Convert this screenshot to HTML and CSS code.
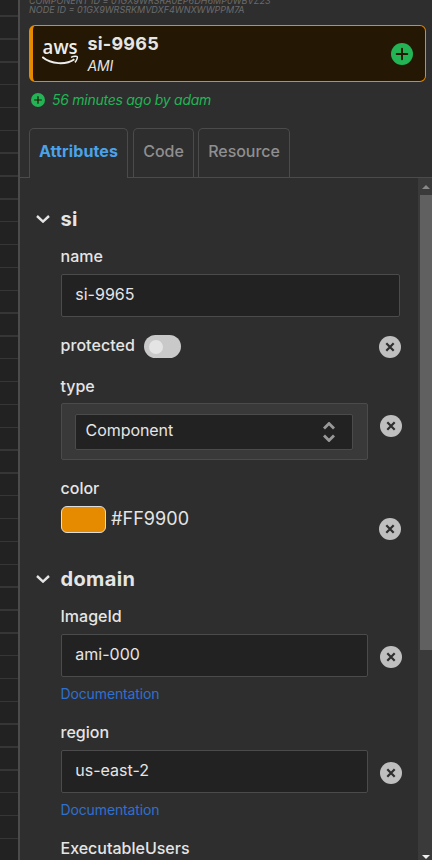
FILE: index.html
```html
<!DOCTYPE html>
<html lang="en">
<head>
<meta charset="utf-8">
<title>si-9965</title>
<link rel="stylesheet" href="styles.css">
</head>
<body>
<svg class="defs" width="0" height="0">
  <symbol id="clear" viewBox="0 0 22 22"><circle cx="11" cy="11" r="11" fill="#bfbfbf"/><path d="M7.3 7.3l7.4 7.4M14.7 7.3l-7.4 7.4" stroke="#2e2e2e" stroke-width="2.2"/></symbol>
  <symbol id="plus" viewBox="0 0 22 22"><circle cx="11" cy="11" r="11" fill="#22b455"/><path d="M11 5.7v10.6M5.7 11h10.6" stroke="#241703" stroke-width="1.9" stroke-linecap="round"/></symbol>
  <symbol id="chevron" viewBox="0 0 14 8"><path d="M1 1l6 5.6L13 1" fill="none" stroke="#e5e5e5" stroke-width="2.4"/></symbol>
</svg>
<div class="app">
  <div class="canvas"></div>
  <aside class="panel">
    <div class="ids"><div class="id-a">COMPONENT ID = 01GX9WRSRA0EP6DH6MP0WBVZ23</div><div class="id-b">NODE ID = 01GX9WRSRKMVDXF4WNXWWPPM7A</div></div>
    <div class="card">
      <svg class="aws" width="38" height="30" viewBox="0 0 38 30"><text x=".6" y="15" textLength="35" lengthAdjust="spacingAndGlyphs">aws</text><path d="M.3 18C9 25.4 24 26.2 32.4 20.2" fill="none" stroke="#eee" stroke-width="2"/><path d="M29 18.4c3-1.4 6-1.3 6.3-.6s-.4 3.6-2.4 5.6" fill="none" stroke="#eee" stroke-width="1.5"/></svg>
      <div class="names"><div class="title">si-9965</div><div class="kind">AMI</div></div>
      <svg class="badge"><use href="#plus"/></svg>
    </div>
    <div class="status"><svg><use href="#plus"/></svg><span>56 minutes ago by adam</span></div>
    <nav class="tabs"><div class="tab active">Attributes</div><div class="tab code">Code</div><div class="tab resource">Resource</div></nav>
    <div class="body">
      <main class="form">
        <div class="section first"><svg><use href="#chevron"/></svg><h2>si</h2></div>
        <div class="label">name</div>
        <div class="row"><div class="input wide">si-9965</div></div>
        <div class="row protected"><span class="text">protected</span><span class="toggle"></span><svg class="clear"><use href="#clear"/></svg></div>
        <div class="label type-label">type</div>
        <div class="row type"><div class="selectbox"><div class="select"><span>Component</span><svg width="12" height="20" viewBox="0 0 12 20"><path d="M1 6.5l5-5 5 5M1 13.5l5 5 5-5" fill="none" stroke="#999" stroke-width="2.8"/></svg></div></div><svg class="clear"><use href="#clear"/></svg></div>
        <div class="label color-label">color</div>
        <div class="row color"><span class="swatch"></span><span class="hex">#FF9900</span><svg class="clear"><use href="#clear"/></svg></div>
        <div class="section domain"><svg><use href="#chevron"/></svg><h2>domain</h2></div>
        <div class="label">ImageId</div>
        <div class="row"><div class="input">ami-000</div><svg class="clear"><use href="#clear"/></svg></div>
        <a class="doc">Documentation</a>
        <div class="label">region</div>
        <div class="row"><div class="input">us-east-2</div><svg class="clear"><use href="#clear"/></svg></div>
        <a class="doc">Documentation</a>
        <div class="label">ExecutableUsers</div>
      </main>
      <div class="scrollbar"><i class="up"></i><div class="thumb"></div><i class="down"></i></div>
    </div>
  </aside>
</div>
</body>
</html>
```
FILE: styles.css
```css
* { box-sizing: border-box; }
body { margin: 0; background: #2e2e2e; color: #e5e5e5; font-family: Inter, sans-serif; overflow: hidden; }
.defs { display: none; }
.app { display: flex; width: 432px; height: 860px; overflow: hidden; }
.canvas { width: 18px; flex: none; background: repeating-linear-gradient(#222 0 21.44px, #363636 21.44px 22.84px) 0 -6px / 18px 900px; }
.panel { flex: 1; min-width: 0; border-left: 2px solid #4b4b4b; display: flex; flex-direction: column; }
.ids { height: 25px; flex: none; padding-left: 9px; margin-top: -4px; margin-bottom: 4px; font-size: 9px; line-height: 9px; font-style: italic; color: #6b6b6b; white-space: nowrap; }
.id-a { letter-spacing: .04px; }
.id-b { letter-spacing: 0; }
.card { flex: none; height: 57px; margin: 0 6px 0 9px; background: #241703; border: 1px solid #e68a00; border-left-width: 4px; border-radius: 6px; display: flex; align-items: center; padding: 0 12px 0 9px; }
.aws text { font: 600 20px "Open Sans", sans-serif; fill: #eee; }
.names { margin-left: 7.5px; flex: 1; }
.title { font-size: 18px; font-weight: 700; line-height: 22px; letter-spacing: .2px; padding-top: 1px; }
.kind { font-size: 14px; font-style: italic; line-height: 21px; letter-spacing: -.2px; }
.badge { width: 22px; height: 22px; }
.status { height: 34px; flex: none; display: flex; align-items: center; padding-left: 11px; gap: 7px; color: #22b455; font-size: 14px; font-style: italic; letter-spacing: -.26px; }
.status svg { width: 14px; height: 14px; margin-top: 1px; }
.tabs { flex: none; height: 62px; padding: 12px 0 0 9px; display: flex; gap: 5px; border-bottom: 1px solid #4b4b4b; }
.tab { height: 49px; border: 1px solid #4b4b4b; border-bottom: 0; border-radius: 5px 5px 0 0; display: flex; justify-content: center; align-items: center; font-size: 16px; font-weight: 500; letter-spacing: -.05px; color: #8f8f8f; padding-bottom: 4px; }
.active { width: 99px; height: 50px; background: #2e2e2e; color: #4aa3ea; font-weight: 700; letter-spacing: .12px; padding-bottom: 5px; }
.code { width: 61px; }
.resource { width: 92px; }
.tab + .resource { margin-left: -1px; }
.body { flex: 1; min-height: 0; display: flex; overflow: hidden; }
.form { flex: 1; padding: 20px 0 0 41px; }
.section { height: 40px; margin-left: -25px; margin-bottom: 2px; display: flex; align-items: center; gap: 10.5px; }
.section svg { width: 14px; height: 8px; }
.first { padding-top: 2px; }
h2 { margin: 0; font-size: 20px; font-weight: 700; line-height: 28px; letter-spacing: .35px; }
.label { height: 34px; line-height: 32px; font-size: 16px; font-weight: 500; text-indent: -.5px; }
.type-label { line-height: 34px; }
.row { display: flex; align-items: flex-start; }
.input { width: 307px; height: 43px; border: 1px solid #4b4b4b; border-radius: 2px; background: #222; padding-left: 13.3px; font-size: 16px; line-height: 38px; }
.input.wide { width: 339px; }
.clear { width: 22px; height: 22px; margin: 11.6px 0 0 11.6px; flex: none; }
.protected { height: 45px; margin-top: 7px; font-size: 16px; font-weight: 500; }
.protected .text { line-height: 42px; width: 83px; text-indent: -.5px; letter-spacing: .06px; }
.toggle { width: 37px; height: 23px; margin-top: 11px; border-radius: 12px; background: #c9c9c9; padding: 5px; }
.toggle::before { content: ""; display: block; width: 14px; height: 14px; border-radius: 50%; background: #e4e4e4; }
.protected .clear, .color .clear { margin-left: auto; margin-right: 16.6px; }
.selectbox { width: 307px; height: 57px; border: 1px solid #4b4b4b; border-radius: 2px; background: #393939; padding: 10px 14px 9px 13px; }
.type .clear { margin-top: 12.4px; }
.select { height: 36px; border: 1px solid #4b4b4b; border-radius: 2px; background: #222; display: flex; align-items: center; justify-content: space-between; padding: 0 17px 0 9.5px; font-size: 16px; letter-spacing: -.05px; }
.select span { margin-top: -4px; }
.color-label { margin-top: 12px; }
.color { height: 27px; }
.swatch { width: 45px; height: 27px; border: 1px solid #ddd; border-radius: 6px; background: #e68a00; }
.hex { margin-left: 5px; font-size: 18px; line-height: 26px; letter-spacing: .07px; }
.domain { margin-top: 26px; margin-bottom: 1px; }
.doc { display: block; height: 34px; line-height: 34px; margin-bottom: 5px; font-size: 14px; letter-spacing: -.13px; text-indent: -.5px; color: #2f70d0; }
.scrollbar { width: 14px; background: #3a3a3a; padding-left: 2px; display: flex; flex-direction: column; align-items: center; }
.thumb { width: 12px; height: 455px; background: #606060; }
.up { height: 17px; padding-top: 7px; }
.up::before, .down::before { content: ""; display: block; border: 4px solid transparent; border-top: 0; border-bottom-color: #888; }
.down { margin-top: auto; padding-bottom: 1px; }
.down::before { border-bottom: 0; border-top: 4px solid #eee; }
```
